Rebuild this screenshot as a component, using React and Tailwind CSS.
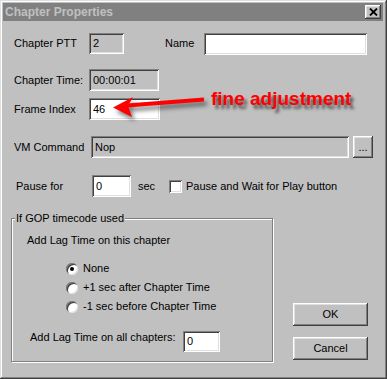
import React from 'react';

const sunken =
  'shadow-[inset_1px_1px_0_#808080,inset_-1px_-1px_0_#ffffff,inset_2px_2px_0_#404040,inset_-2px_-2px_0_#dfdfdf]';
const raised =
  'shadow-[inset_-1px_-1px_0_#404040,inset_1px_1px_0_#ffffff,inset_-2px_-2px_0_#808080,inset_2px_2px_0_#dfdfdf]';

const Field = ({ w, h = 'h-[22px]', white, children }) => (
  <div className={`${w} ${h} ${white ? 'bg-white' : 'bg-[#c0c0c0]'} ${sunken} flex items-center pl-[4px] shrink-0`}>
    {children}
  </div>
);

const Radio = ({ checked }) => (
  <div className="w-[12px] h-[12px] rounded-full bg-white shadow-[inset_1px_1px_0_#808080,inset_-1px_-1px_0_#dfdfdf,inset_2px_2px_0_#404040] flex items-center justify-center shrink-0">
    {checked && <div className="w-[4px] h-[4px] rounded-full bg-black" />}
  </div>
);

const App = () => {
  return (
    <div className="relative w-[387px] h-[379px] bg-[#c0c0c0] p-[3px] text-[11px] leading-[13px] text-black font-['Liberation_Sans',Arial,sans-serif] shadow-[inset_-1px_-1px_0_#404040,inset_1px_1px_0_#dfdfdf,inset_-2px_-2px_0_#808080,inset_2px_2px_0_#ffffff]">
      {/* title bar */}
      <div className="h-[18px] w-[380px] bg-[#808080] flex items-center justify-between pl-[2px] pr-[2px]">
        <span className="text-[12px] font-bold text-[#c0c0c0]">Chapter Properties</span>
        <div className={`w-[16px] h-[14px] bg-[#c0c0c0] ${raised} flex items-center justify-center`}>
          <svg width="9" height="8" viewBox="0 0 9 8">
            <path d="M1 0.5L8 7.5M8 0.5L1 7.5" stroke="#000" strokeWidth="1.8" />
          </svg>
        </div>
      </div>

      <div className="flex flex-col">
        {/* Chapter PTT / Name */}
        <div className="mt-[11px] h-[23px] flex items-center pl-[11px]">
          <span className="w-[75px] shrink-0">Chapter PTT</span>
          <Field w="w-[35px]" h="h-[21px]">2</Field>
          <span className="ml-[41px] w-[39px] shrink-0">Name</span>
          <Field w="w-[163px]" white />
        </div>

        <div className="mt-[14px] h-[22px] flex items-center pl-[11px]">
          <span className="w-[75px] shrink-0">Chapter Time:</span>
          <Field w="w-[70px]">00:00:01</Field>
        </div>

        <div className="mt-[7px] h-[22px] flex items-center pl-[11px]">
          <span className="w-[75px] shrink-0">Frame Index</span>
          <Field w="w-[71px]" white>46</Field>
        </div>

        <div className="mt-[16px] h-[22px] flex items-center pl-[11px]">
          <span className="w-[77px] shrink-0">VM Command</span>
          <Field w="w-[258px]">Nop</Field>
          <div className={`ml-[4px] w-[20px] h-[22px] ${raised} flex items-center justify-center shrink-0`}>...</div>
        </div>

        <div className="mt-[17px] h-[22px] flex items-center pl-[13px]">
          <span className="w-[76px] shrink-0">Pause for</span>
          <Field w="w-[39px]" white>0</Field>
          <span className="ml-[7px] w-[31px] shrink-0">sec</span>
          <div className={`w-[13px] h-[13px] bg-white ${sunken} shrink-0`} />
          <span className="ml-[4px]">Pause and Wait for Play button</span>
        </div>

        {/* bottom section */}
        <div className="mt-[21px] flex pl-[8px]">
          <div className="relative w-[262px] h-[144px] border border-[#808080] shadow-[inset_1px_1px_0_#ffffff,1px_1px_0_#ffffff] pt-[15px] shrink-0">
            <span className="absolute -top-[7px] left-[3px] bg-[#c0c0c0] px-[1px]">If GOP timecode used</span>
            <div className="pl-[15px]">Add Lag Time on this chapter</div>
            <div className="mt-[12px] pl-[54px] flex flex-col">
              {[
                ['None', true],
                ['+1 sec after Chapter Time', false],
                ['-1 sec before Chapter Time', false],
              ].map(([label, checked]) => (
                <div key={label} className="h-[19px] flex items-center gap-[5px]">
                  <Radio checked={checked} />
                  <span>{label}</span>
                </div>
              ))}
            </div>
            <div className="mt-[15px] flex items-start pl-[18px]">
              <span className="w-[153px] shrink-0">Add Lag Time on all chapters:</span>
              <Field w="w-[37px]" h="h-[21px]" white>0</Field>
            </div>
          </div>

          <div className="ml-[20px] mt-[85px] flex flex-col gap-[11px]">
            <div className={`w-[75px] h-[23px] ${raised} flex items-center justify-center`}>OK</div>
            <div className={`w-[75px] h-[23px] ${raised} flex items-center justify-center`}>Cancel</div>
          </div>
        </div>
      </div>

      {/* annotation overlay */}
      <svg
        className="absolute left-[100px] top-[90px] drop-shadow-[3px_4px_2px_rgba(0,0,0,0.5)]"
        width="115"
        height="35"
        viewBox="100 90 115 35"
      >
        <path d="M204 99.5L127 105.5" stroke="#ff0000" strokeWidth="4" />
        <polygon points="113,107.5 133,97 128,106 132,117" fill="#ff0000" />
      </svg>
      <span className="absolute left-[211px] top-[89px] text-[19px] leading-none font-bold text-[#ff0000] [text-shadow:3px_4px_3px_rgba(0,0,0,0.55)]">
        fine adjustment
      </span>
    </div>
  );
};

export default App;
